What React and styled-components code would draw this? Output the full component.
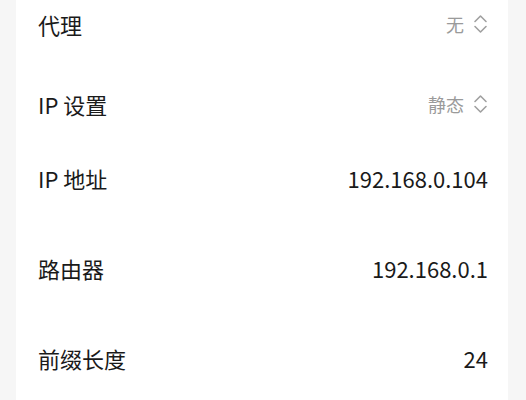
import React from "react";
import styled, { createGlobalStyle } from "styled-components";

const Global = createGlobalStyle`
  html, body { margin: 0; padding: 0; background: #f6f6f6; }
  body { font-family: "Noto Sans CJK SC", "Noto Sans", sans-serif; }
`;

const Page = styled.div`
  width: 526px;
  height: 400px;
  overflow: hidden;
  background: #f6f6f6;
  display: flex;
  padding: 0 18px 0 16px;
  box-sizing: border-box;
`;

const Card = styled.div`
  flex: 1;
  background: #ffffff;
  padding: 9px 20px 0 22px;
  display: flex;
  flex-direction: column;
`;

const Row = styled.div`
  display: flex;
  align-items: center;
  justify-content: space-between;
  height: 30px;
  margin-top: ${(p) => p.$gap || 0}px;
`;

const Label = styled.span`
  font-size: 22px;
  line-height: 30px;
  color: #1a1a1a;
`;

const Value = styled.span`
  font-size: 22px;
  line-height: 30px;
  color: #1a1a1a;
`;

const Picker = styled.span`
  display: flex;
  align-items: center;
  gap: 9px;
`;

const PickerText = styled.span`
  font-size: 18px;
  line-height: 30px;
  color: #9a9a9a;
`;

const Chevrons = () => (
  <svg width="15" height="22" viewBox="0 0 15 22" fill="none">
    <path d="M2 8.5 L7.5 3 L13 8.5" stroke="#a0a0a0" strokeWidth="1.6" strokeLinecap="round" strokeLinejoin="round" />
    <path d="M2 13.5 L7.5 19 L13 13.5" stroke="#a0a0a0" strokeWidth="1.6" strokeLinecap="round" strokeLinejoin="round" />
  </svg>
);

const rows = [
  { label: "代理", pick: "无", gap: 0 },
  { label: "IP 设置", pick: "静态", gap: 49.5 },
  { label: "IP 地址", value: "192.168.0.104", gap: 44.5 },
  { label: "路由器", value: "192.168.0.1", gap: 59.5 },
  { label: "前缀长度", value: "24", gap: 60 },
];

export default function App() {
  return (
    <>
      <Global />
      <Page>
        <Card>
          {rows.map((r) => (
            <Row key={r.label} $gap={r.gap}>
              <Label>{r.label}</Label>
              {r.pick ? (
                <Picker>
                  <PickerText>{r.pick}</PickerText>
                  <Chevrons />
                </Picker>
              ) : (
                <Value>{r.value}</Value>
              )}
            </Row>
          ))}
        </Card>
      </Page>
    </>
  );
}
